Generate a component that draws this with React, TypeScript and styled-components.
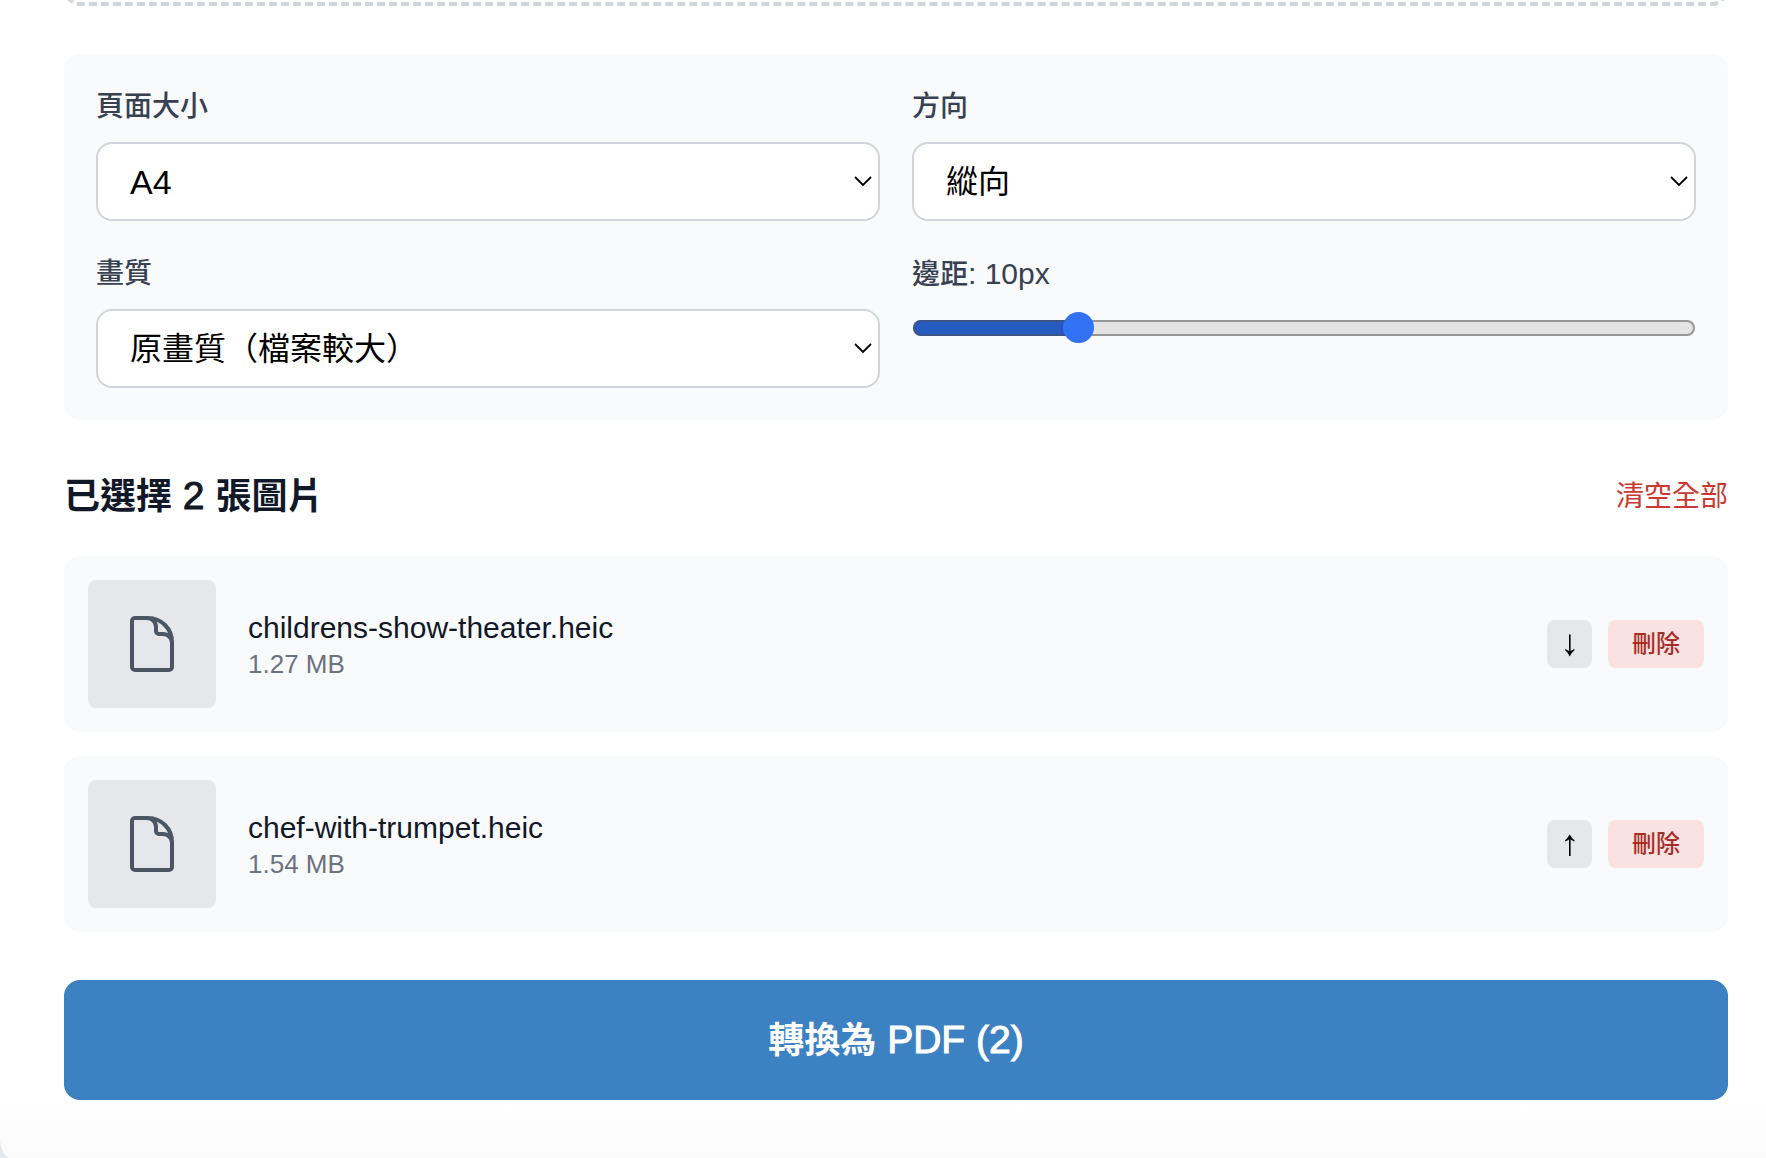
import React, { useState } from "react";
import styled, { createGlobalStyle } from "styled-components";

const GlobalStyle = createGlobalStyle`
  *, *::before, *::after { box-sizing: border-box; }
  body {
    margin: 0;
    background: #e3e8ee;
    font-family: "Liberation Sans", "Noto Sans CJK TC", sans-serif;
    color: #111827;
  }
  button, select, input { font-family: inherit; margin: 0; }
`;

const Page = styled.div`
  height: 100vh;
  overflow: hidden auto;
  scrollbar-width: none;
`;

const Card = styled.main`
  padding: 0 38px 64px 64px;
  border-radius: 0 0 0 24px;
  background: linear-gradient(to top, #fbfbfb, #ffffff 64px);
`;

const DropZoneClip = styled.div`
  height: 6px;
  margin-bottom: 48px;
  display: flex;
  align-items: flex-end;
  overflow: hidden;
`;

const DropZone = styled.div`
  flex: 1;
  height: 80px;
  border: 4px dashed #d1d5db;
  border-radius: 16px;
`;

const Settings = styled.section`
  display: grid;
  grid-template-columns: 1fr 1fr;
  gap: 32px;
  padding: 32px;
  border-radius: 16px;
  background: #f9fafc;
`;

const Field = styled.div`
  display: flex;
  flex-direction: column;
  gap: 16px;
`;

const Label = styled.label`
  font-size: 28px;
  line-height: 42px;
  height: 40px;
  font-weight: 500;
  color: #374151;
`;

const Latin = styled.span<{ $size: number; $bold?: boolean }>`
  font-size: ${(p) => p.$size}px;
  font-weight: 500;
  -webkit-text-stroke: ${(p) => (p.$bold ? "1px currentColor" : "0")};
`;

const SelectBox = styled.div`
  position: relative;
  display: flex;
`;

const Select = styled.select<{ $size: number }>`
  flex: 1;
  appearance: none;
  height: 79px;
  padding: 0 32px;
  border: 2px solid #d1d5db;
  border-radius: 16px;
  background: #ffffff;
  color: #000000;
  font-size: ${(p) => p.$size}px;
`;

const Chevron = styled.svg`
  position: absolute;
  right: 7px;
  top: 50%;
  width: 20px;
  height: 12px;
  margin-top: -7px;
  pointer-events: none;
`;

const Slider = styled.input`
  appearance: none;
  height: 38px;
  padding: 0 1px;
  background: transparent;

  &::-webkit-slider-runnable-track {
    height: 16px;
    border-radius: 8px;
    background: linear-gradient(to right, #255bc1 var(--fill), #e4e4e4 var(--fill));
    box-shadow: inset 0 0 0 2px rgba(78, 78, 78, 0.52);
  }

  &::-webkit-slider-thumb {
    appearance: none;
    width: 31px;
    height: 31px;
    margin-top: -8px;
    border: 0;
    border-radius: 50%;
    background: #3273f6;
  }
`;

const ListHeader = styled.header`
  display: flex;
  align-items: center;
  justify-content: space-between;
  height: 56px;
  margin: 48px 0 32px;
`;

const Title = styled.h2`
  margin: 0;
  font-size: 36px;
  line-height: 56px;
  font-weight: 700;
`;

const ClearButton = styled.button`
  padding: 2px 0 0;
  border: 0;
  background: none;
  color: #cb3a31;
  font-size: 28px;
  line-height: 40px;
`;

const FileList = styled.ul`
  display: flex;
  flex-direction: column;
  gap: 24px;
  margin: 0;
  padding: 0;
  list-style: none;
`;

const FileRow = styled.li`
  display: flex;
  align-items: center;
  padding: 24px;
  border-radius: 16px;
  background: #f9fafc;
`;

const Thumb = styled.div`
  display: flex;
  align-items: center;
  justify-content: center;
  width: 128px;
  height: 128px;
  margin-right: 32px;
  border-radius: 8px;
  background: #e5e7eb;
  color: #4b5563;
`;

const FileInfo = styled.div`
  flex: 1;
  min-width: 0;
`;

const FileName = styled.p`
  margin: 0;
  font-size: 30px;
  line-height: 40px;
  font-weight: 500;
`;

const FileSize = styled.p`
  margin: 0;
  font-size: 26px;
  line-height: 32px;
  color: #6b7280;
`;

const Actions = styled.div`
  display: flex;
  gap: 16px;
`;

const SmallButton = styled.button`
  display: flex;
  align-items: center;
  height: 48px;
  padding: 0 16px;
  border: 0;
  border-radius: 8px;
  background: #e5e7eb;
  color: #000000;
  line-height: 32px;
`;

const DeleteButton = styled(SmallButton)`
  padding: 0 24px;
  background: #f9e2e1;
  color: #a82d26;
  font-size: 24px;
  font-weight: 500;
`;

const ConvertButton = styled.button`
  width: 100%;
  height: 120px;
  margin-top: 48px;
  border: 0;
  border-radius: 16px;
  background: #3c81c2;
  color: #ffffff;
  font-size: 36px;
  line-height: 56px;
  font-weight: 700;
`;

function DocumentIcon() {
  return (
    <svg width="64" height="64" viewBox="0 0 24 24" fill="none" stroke="currentColor" strokeWidth="1.5" strokeLinecap="round" strokeLinejoin="round" aria-hidden="true">
      <path d="M19.5 14.25v-2.625a3.375 3.375 0 0 0-3.375-3.375h-1.5A1.125 1.125 0 0 1 13.5 7.125v-1.5a3.375 3.375 0 0 0-3.375-3.375H8.25m2.25 0H5.625c-.621 0-1.125.504-1.125 1.125v17.25c0 .621.504 1.125 1.125 1.125h12.75c.621 0 1.125-.504 1.125-1.125V11.25a9 9 0 0 0-9-9Z" />
    </svg>
  );
}

function ArrowIcon({ up = false }: { up?: boolean }) {
  return (
    <svg width="13" height="28" viewBox="0 0 13 28" aria-hidden="true">
      {up ? (
        <path d="M6 26V9.4L2.4 11.4L2 10.4Q4.6 8.2 6.7 4.4Q8.8 8.2 11.6 10.4L11.2 11.4L7.6 9.4V26Z" />
      ) : (
        <path d="M6 4.500V21L2.400 19L2 20Q4.600 22.200 6.700 26.600Q8.800 22.200 11.600 20L11.200 19L7.600 21V4.500Z" />
      )}
    </svg>
  );
}

interface SelectFieldProps {
  id: string;
  label: string;
  options: string[];
  size?: number;
}

function SelectField({ id, label, options, size = 32 }: SelectFieldProps) {
  return (
    <Field>
      <Label htmlFor={id}>{label}</Label>
      <SelectBox>
        <Select id={id} $size={size}>
          {options.map((option) => (
            <option key={option}>{option}</option>
          ))}
        </Select>
        <Chevron viewBox="0 0 20 12" fill="none" stroke="#000000" strokeWidth="1.8" aria-hidden="true">
          <path d="M2 2l8 8 8-8" />
        </Chevron>
      </SelectBox>
    </Field>
  );
}

const files = [
  { name: "childrens-show-theater.heic", size: "1.27 MB" },
  { name: "chef-with-trumpet.heic", size: "1.54 MB" },
];

const MAX_MARGIN = 50;

export default function App() {
  const [margin, setMargin] = useState(10);
  const fill = { "--fill": `${(margin / MAX_MARGIN) * 100}%` } as React.CSSProperties;

  return (
    <Page>
      <GlobalStyle />
      <Card>
        <DropZoneClip>
          <DropZone />
        </DropZoneClip>

        <Settings>
          <SelectField id="page-size" label="頁面大小" options={["A4"]} size={34} />
          <SelectField id="orientation" label="方向" options={["縱向"]} />
          <SelectField id="quality" label="畫質" options={["原畫質（檔案較大）"]} />
          <Field>
            <Label htmlFor="margin">
              邊距<Latin $size={30}>: {margin}px</Latin>
            </Label>
            <Slider
              id="margin"
              type="range"
              min={0}
              max={MAX_MARGIN}
              value={margin}
              style={fill}
              onChange={(e) => setMargin(Number(e.target.value))}
            />
          </Field>
        </Settings>

        <ListHeader>
          <Title>
            已選擇<Latin $size={39} $bold> {files.length} </Latin>張圖片
          </Title>
          <ClearButton type="button">清空全部</ClearButton>
        </ListHeader>

        <FileList>
          {files.map((file, index) => (
            <FileRow key={file.name}>
              <Thumb>
                <DocumentIcon />
              </Thumb>
              <FileInfo>
                <FileName>{file.name}</FileName>
                <FileSize>{file.size}</FileSize>
              </FileInfo>
              <Actions>
                {index > 0 && (
                  <SmallButton type="button" aria-label="上移">
                    <ArrowIcon up />
                  </SmallButton>
                )}
                {index < files.length - 1 && (
                  <SmallButton type="button" aria-label="下移">
                    <ArrowIcon />
                  </SmallButton>
                )}
                <DeleteButton type="button">刪除</DeleteButton>
              </Actions>
            </FileRow>
          ))}
        </FileList>

        <ConvertButton type="button">
          轉換為<Latin $size={39} $bold> PDF ({files.length})</Latin>
        </ConvertButton>
      </Card>
    </Page>
  );
}
